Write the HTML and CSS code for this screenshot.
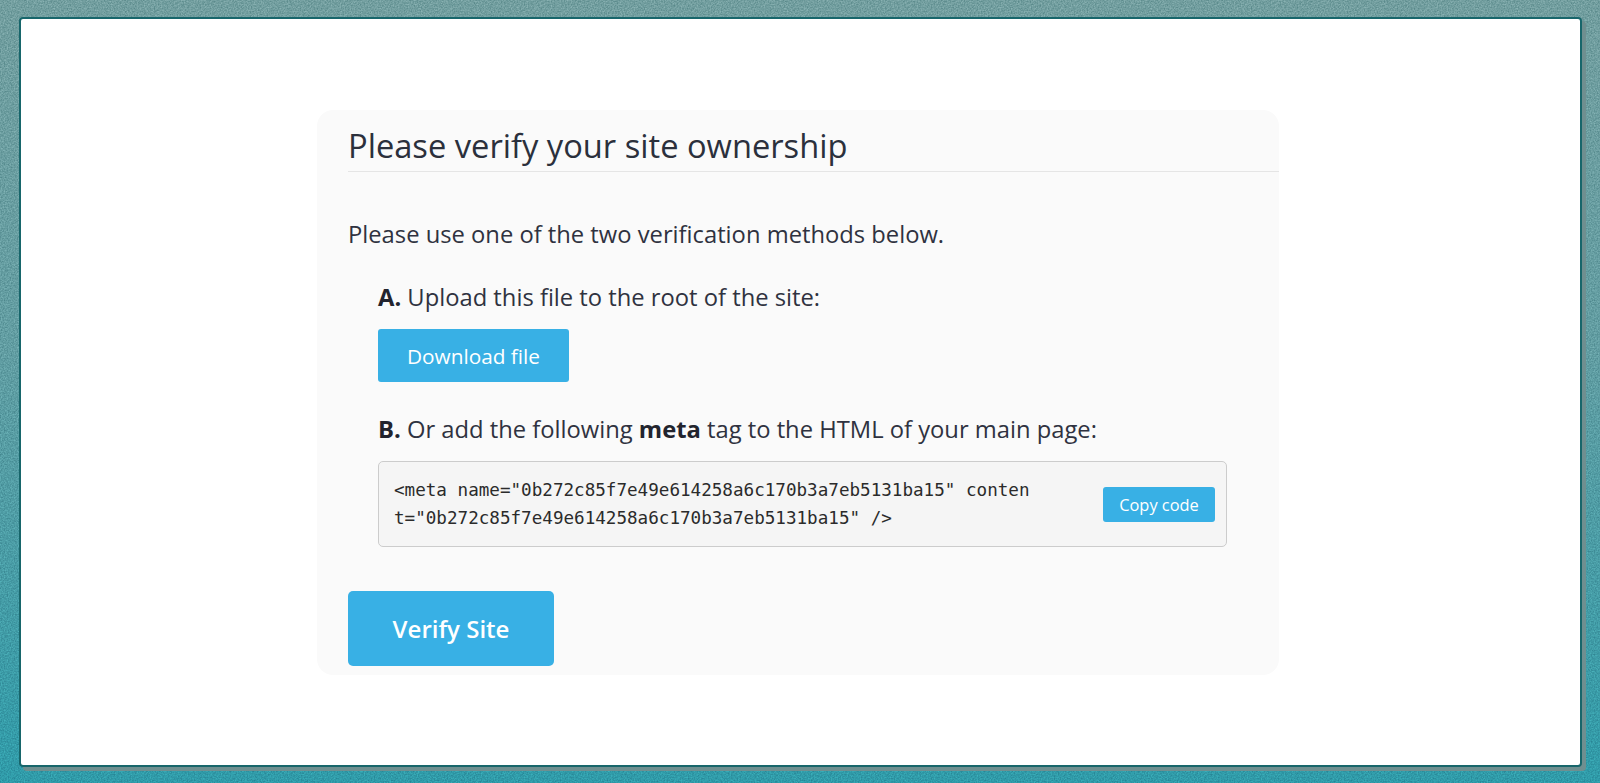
FILE: index.html
```html
<!DOCTYPE html>
<html lang="en">
<head>
<meta charset="utf-8">
<title>Verify site</title>
<link rel="stylesheet" href="styles.css">
</head>
<body>
<svg class="noise" aria-hidden="true"><filter id="grain" x="0" y="0" width="100%" height="100%" color-interpolation-filters="sRGB"><feTurbulence type="fractalNoise" baseFrequency="0.7" numOctaves="2"/><feColorMatrix values="1.6 0 0 0 -0.3 1.6 0 0 0 -0.3 1.6 0 0 0 -0.3 0 0 0 0 1"/></filter><rect width="100%" height="100%" filter="url(#grain)"/></svg>
<main class="frame">
  <section class="card">
    <h1 class="title">Please verify your site ownership</h1>
    <p class="intro">Please use one of the two verification methods below.</p>
    <div class="method">
      <p class="step"><b>A.</b> Upload this file to the root of the site:</p>
      <a class="btn btn-download">Download file</a>
      <p class="step step-b"><b>B.</b> Or add the following <b>meta</b> tag to the HTML of your main page:</p>
      <div class="codebox">
        <code class="code">&lt;meta name="0b272c85f7e49e614258a6c170b3a7eb5131ba15" conten<br>t="0b272c85f7e49e614258a6c170b3a7eb5131ba15" /&gt;</code>
        <a class="btn btn-copy">Copy code</a>
      </div>
    </div>
    <a class="btn btn-verify">Verify Site</a>
  </section>
</main>
</body>
</html>
```
FILE: styles.css
```css
html, body { margin: 0; height: 783px; overflow: hidden; }
body {
  background: linear-gradient(180deg, #729e9f 0%, #619da2 45%, #2f9ba9 100%);
  font-family: "Open Sans", "Noto Sans", sans-serif;
  color: #2f3240;
  padding: 17px 18px 16px 19px;
  box-sizing: border-box;
}
.noise { position: absolute; inset: 0; width: 100%; height: 100%; mix-blend-mode: overlay; opacity: .22; }
.frame {
  position: relative;
  box-sizing: border-box;
  height: 750px;
  background: #fff;
  border: 2px solid #17666b;
  border-radius: 4px;
  box-shadow: 4px 4px 0 #6f8f90;
  padding-top: 91px;
}
.card {
  box-sizing: border-box;
  width: 962px;
  height: 565px;
  margin-left: 296px;
  padding: 0 0 0 31px;
  background: #fafafa;
  border-radius: 16px;
}
.title {
  margin: 0;
  padding: 14px 0 4px;
  font-size: 32.67px;
  line-height: 43px;
  font-weight: 400;
  color: #2b303c;
  border-bottom: 1px solid #e5e5e5;
}
.intro { margin: 0; padding-top: 47px; font-size: 23.75px; line-height: 30px; }
.method { padding: 0 0 0 30px; }
.step { margin: 0; padding-top: 33px; font-size: 23.75px; line-height: 30px; }
.step-b { padding-top: 32px; }
.step b { color: #22242e; }
.btn {
  display: flex;
  align-items: center;
  justify-content: center;
  box-sizing: border-box;
  background: #38b0e5;
  color: #fff;
  border-radius: 3px;
}
.btn-download { width: 191px; height: 53px; margin-top: 17px; font-size: 20.8px; }
.codebox {
  box-sizing: border-box;
  display: flex;
  align-items: center;
  justify-content: space-between;
  width: 849px;
  height: 86px;
  margin-top: 17px;
  padding: 0 11px 0 15px;
  background: #f5f5f5;
  border: 1px solid #ccc;
  border-radius: 5px;
}
.code { font-family: "DejaVu Sans Mono", monospace; font-size: 17.6px; line-height: 28px; color: #2b2b2b; }
.btn-copy { width: 112px; height: 35px; margin-top: 1px; font-size: 16.4px; }
.btn-verify { width: 206px; height: 75px; margin-top: 44px; font-size: 24px; font-weight: 600; border-radius: 5px; }
```
